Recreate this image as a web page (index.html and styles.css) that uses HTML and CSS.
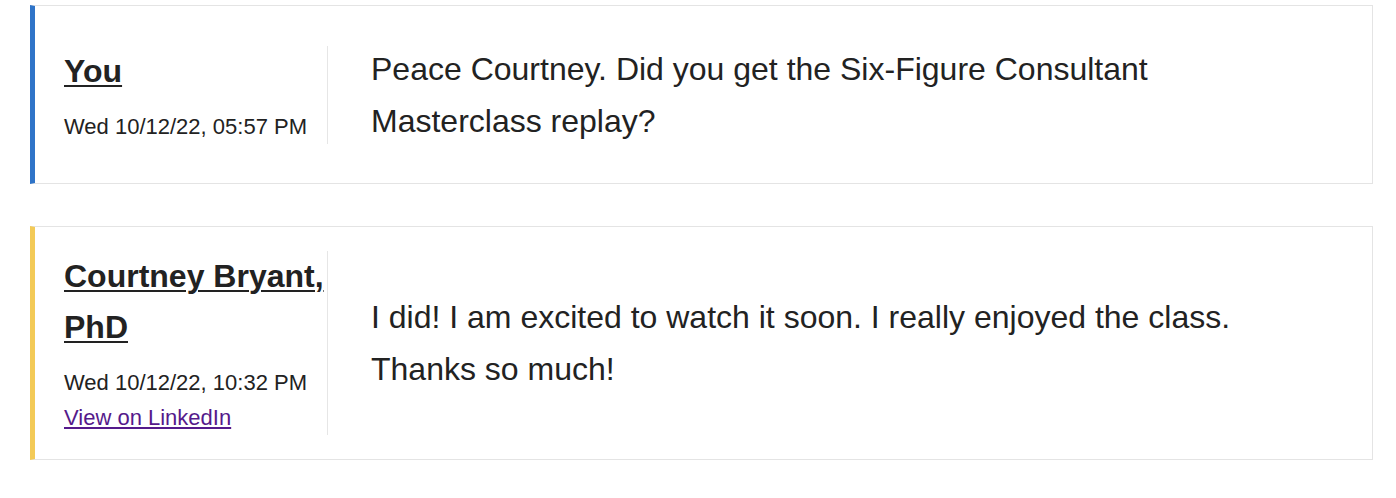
FILE: index.html
```html
<!DOCTYPE html>
<html>
<head>
<meta charset="utf-8">
<link rel="stylesheet" href="styles.css">
</head>
<body>
<div class="thread">
  <div class="msg msg-you">
    <div class="meta">
      <a class="name" href="#">You</a>
      <div class="date">Wed 10/12/22, 05:57 PM</div>
    </div>
    <div class="body">Peace Courtney. Did you get the Six-Figure Consultant Masterclass replay?</div>
  </div>
  <div class="msg msg-them">
    <div class="meta">
      <a class="name" href="#">Courtney Bryant, PhD</a>
      <div class="date">Wed 10/12/22, 10:32 PM</div>
      <a class="li" href="#">View on LinkedIn</a>
    </div>
    <div class="body">I did! I am excited to watch it soon. I really enjoyed the class. Thanks so much!</div>
  </div>
</div>
</body>
</html>
```
FILE: styles.css
```css
html, body {
  margin: 0;
  background: #fff;
}
body {
  font-family: "Liberation Sans", Arial, Helvetica, sans-serif;
  color: #222;
}
.thread {
  display: flex;
  flex-direction: column;
  gap: 42px;
  padding: 5px 23px 0 30px;
}
.msg {
  display: flex;
  align-items: center;
  min-height: 129px;
  padding: 24px 40px 24px 29px;
  border: 1px solid #e4e4e4;
  border-left: 5px solid #2f74c8;
}
.msg-them {
  border-left-color: #f3ca57;
}
.meta {
  width: 263px;
  flex: none;
  border-right: 1px solid #e6e6e6;
  display: flex;
  flex-direction: column;
  align-items: flex-start;
}
.name {
  font-size: 32px;
  font-weight: bold;
  line-height: 51px;
  color: #222;
  text-decoration: underline;
  text-underline-offset: 3px;
  text-decoration-thickness: 2px;
}
.date {
  margin-top: 12px;
  font-size: 22px;
  line-height: 35px;
  color: #222;
}
.li {
  font-size: 22px;
  line-height: 35px;
  color: #551a8b;
  text-decoration: underline;
}
.body {
  margin-left: 43px;
  max-width: 900px;
  font-size: 32px;
  line-height: 52px;
  color: #222;
}
```
